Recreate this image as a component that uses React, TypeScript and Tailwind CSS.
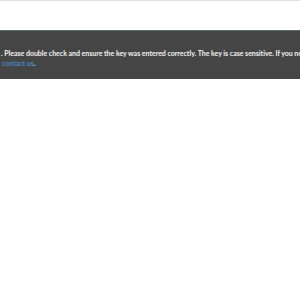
export default function App() {
  return (
    <div className="h-[300px] w-[300px] overflow-hidden bg-white font-['Lato','Noto_Sans',sans-serif]">
      <div className="h-px w-full bg-[#e2e2e2]" />
      <div className="mt-[29px] h-[49px] w-full border-t border-[#5e6e6c] bg-[#454545] pt-[17px] text-[7px] font-bold leading-[10px] tracking-[-0.03px] text-[#f2f2f2]">
        <div className="whitespace-nowrap pl-[1px]">
          . Please double check and ensure the key was entered correctly. The key is case sensitive. If you need help, please
        </div>
        <div className="whitespace-nowrap pl-[2px]">
          <a href="#" className="text-[#4a86c0]">contact us</a>.
        </div>
      </div>
    </div>
  );
}
